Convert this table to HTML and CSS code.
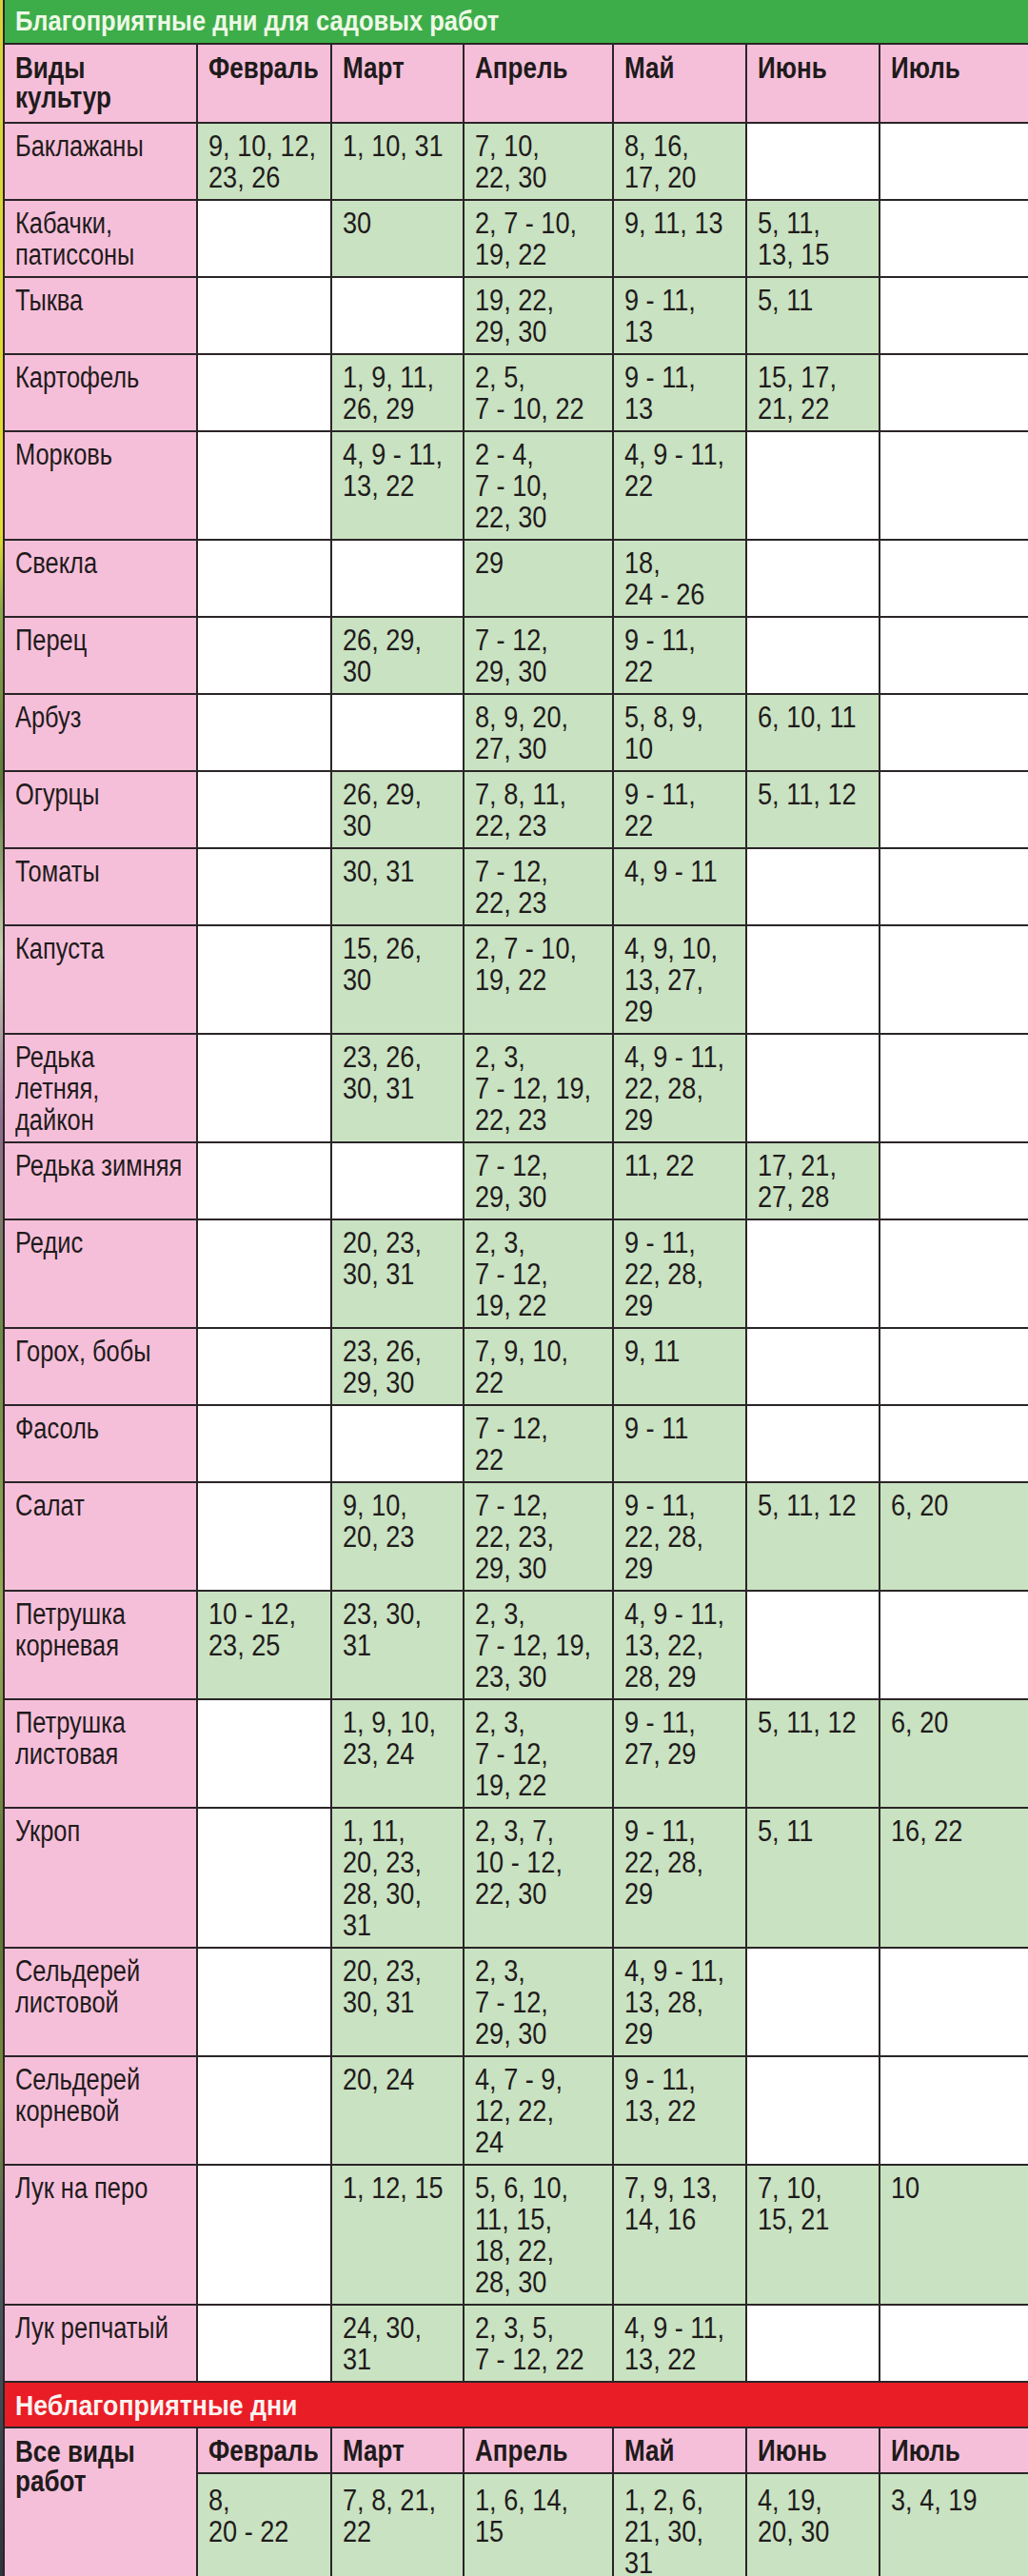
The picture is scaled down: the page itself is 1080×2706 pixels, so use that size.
FILE: index.html
```html
<!DOCTYPE html>
<html lang="ru">
<head>
<meta charset="utf-8">
<title>Благоприятные дни для садовых работ</title>
<link rel="stylesheet" href="styles.css">
</head>
<body>
<div class="sheet">
  <div class="band band-green"><span class="t">Благоприятные дни для садовых работ</span></div>
  <div class="grid">
    <div class="c name head"><span class="t">Виды<br>культур</span></div>
    <div class="c head"><span class="t">Февраль</span></div>
    <div class="c head"><span class="t">Март</span></div>
    <div class="c head"><span class="t">Апрель</span></div>
    <div class="c head"><span class="t">Май</span></div>
    <div class="c head"><span class="t">Июнь</span></div>
    <div class="c head"><span class="t">Июль</span></div>

    <div class="c name"><span class="t">Баклажаны</span></div>
    <div class="c g"><span class="t">9, 10, 12,<br>23, 26</span></div>
    <div class="c g"><span class="t">1, 10, 31</span></div>
    <div class="c g"><span class="t">7, 10,<br>22, 30</span></div>
    <div class="c g"><span class="t">8, 16,<br>17, 20</span></div>
    <div class="c"></div>
    <div class="c"></div>

    <div class="c name"><span class="t">Кабачки,<br>патиссоны</span></div>
    <div class="c"></div>
    <div class="c g"><span class="t">30</span></div>
    <div class="c g"><span class="t">2, 7 - 10,<br>19, 22</span></div>
    <div class="c g"><span class="t">9, 11, 13</span></div>
    <div class="c g"><span class="t">5, 11,<br>13, 15</span></div>
    <div class="c"></div>

    <div class="c name"><span class="t">Тыква</span></div>
    <div class="c"></div>
    <div class="c"></div>
    <div class="c g"><span class="t">19, 22,<br>29, 30</span></div>
    <div class="c g"><span class="t">9 - 11,<br>13</span></div>
    <div class="c g"><span class="t">5, 11</span></div>
    <div class="c"></div>

    <div class="c name"><span class="t">Картофель</span></div>
    <div class="c"></div>
    <div class="c g"><span class="t">1, 9, 11,<br>26, 29</span></div>
    <div class="c g"><span class="t">2, 5,<br>7 - 10, 22</span></div>
    <div class="c g"><span class="t">9 - 11,<br>13</span></div>
    <div class="c g"><span class="t">15, 17,<br>21, 22</span></div>
    <div class="c"></div>

    <div class="c name"><span class="t">Морковь</span></div>
    <div class="c"></div>
    <div class="c g"><span class="t">4, 9 - 11,<br>13, 22</span></div>
    <div class="c g"><span class="t">2 - 4,<br>7 - 10,<br>22, 30</span></div>
    <div class="c g"><span class="t">4, 9 - 11,<br>22</span></div>
    <div class="c"></div>
    <div class="c"></div>

    <div class="c name"><span class="t">Свекла</span></div>
    <div class="c"></div>
    <div class="c"></div>
    <div class="c g"><span class="t">29</span></div>
    <div class="c g"><span class="t">18,<br>24 - 26</span></div>
    <div class="c"></div>
    <div class="c"></div>

    <div class="c name"><span class="t">Перец</span></div>
    <div class="c"></div>
    <div class="c g"><span class="t">26, 29,<br>30</span></div>
    <div class="c g"><span class="t">7 - 12,<br>29, 30</span></div>
    <div class="c g"><span class="t">9 - 11,<br>22</span></div>
    <div class="c"></div>
    <div class="c"></div>

    <div class="c name"><span class="t">Арбуз</span></div>
    <div class="c"></div>
    <div class="c"></div>
    <div class="c g"><span class="t">8, 9, 20,<br>27, 30</span></div>
    <div class="c g"><span class="t">5, 8, 9,<br>10</span></div>
    <div class="c g"><span class="t">6, 10, 11</span></div>
    <div class="c"></div>

    <div class="c name"><span class="t">Огурцы</span></div>
    <div class="c"></div>
    <div class="c g"><span class="t">26, 29,<br>30</span></div>
    <div class="c g"><span class="t">7, 8, 11,<br>22, 23</span></div>
    <div class="c g"><span class="t">9 - 11,<br>22</span></div>
    <div class="c g"><span class="t">5, 11, 12</span></div>
    <div class="c"></div>

    <div class="c name"><span class="t">Томаты</span></div>
    <div class="c"></div>
    <div class="c g"><span class="t">30, 31</span></div>
    <div class="c g"><span class="t">7 - 12,<br>22, 23</span></div>
    <div class="c g"><span class="t">4, 9 - 11</span></div>
    <div class="c"></div>
    <div class="c"></div>

    <div class="c name"><span class="t">Капуста</span></div>
    <div class="c"></div>
    <div class="c g"><span class="t">15, 26,<br>30</span></div>
    <div class="c g"><span class="t">2, 7 - 10,<br>19, 22</span></div>
    <div class="c g"><span class="t">4, 9, 10,<br>13, 27,<br>29</span></div>
    <div class="c"></div>
    <div class="c"></div>

    <div class="c name"><span class="t">Редька<br>летняя,<br>дайкон</span></div>
    <div class="c"></div>
    <div class="c g"><span class="t">23, 26,<br>30, 31</span></div>
    <div class="c g"><span class="t">2, 3,<br>7 - 12, 19,<br>22, 23</span></div>
    <div class="c g"><span class="t">4, 9 - 11,<br>22, 28,<br>29</span></div>
    <div class="c"></div>
    <div class="c"></div>

    <div class="c name"><span class="t">Редька зимняя</span></div>
    <div class="c"></div>
    <div class="c"></div>
    <div class="c g"><span class="t">7 - 12,<br>29, 30</span></div>
    <div class="c g"><span class="t">11, 22</span></div>
    <div class="c g"><span class="t">17, 21,<br>27, 28</span></div>
    <div class="c"></div>

    <div class="c name"><span class="t">Редис</span></div>
    <div class="c"></div>
    <div class="c g"><span class="t">20, 23,<br>30, 31</span></div>
    <div class="c g"><span class="t">2, 3,<br>7 - 12,<br>19, 22</span></div>
    <div class="c g"><span class="t">9 - 11,<br>22, 28,<br>29</span></div>
    <div class="c"></div>
    <div class="c"></div>

    <div class="c name"><span class="t">Горох, бобы</span></div>
    <div class="c"></div>
    <div class="c g"><span class="t">23, 26,<br>29, 30</span></div>
    <div class="c g"><span class="t">7, 9, 10,<br>22</span></div>
    <div class="c g"><span class="t">9, 11</span></div>
    <div class="c"></div>
    <div class="c"></div>

    <div class="c name"><span class="t">Фасоль</span></div>
    <div class="c"></div>
    <div class="c"></div>
    <div class="c g"><span class="t">7 - 12,<br>22</span></div>
    <div class="c g"><span class="t">9 - 11</span></div>
    <div class="c"></div>
    <div class="c"></div>

    <div class="c name"><span class="t">Салат</span></div>
    <div class="c"></div>
    <div class="c g"><span class="t">9, 10,<br>20, 23</span></div>
    <div class="c g"><span class="t">7 - 12,<br>22, 23,<br>29, 30</span></div>
    <div class="c g"><span class="t">9 - 11,<br>22, 28,<br>29</span></div>
    <div class="c g"><span class="t">5, 11, 12</span></div>
    <div class="c g"><span class="t">6, 20</span></div>

    <div class="c name"><span class="t">Петрушка<br>корневая</span></div>
    <div class="c g"><span class="t">10 - 12,<br>23, 25</span></div>
    <div class="c g"><span class="t">23, 30,<br>31</span></div>
    <div class="c g"><span class="t">2, 3,<br>7 - 12, 19,<br>23, 30</span></div>
    <div class="c g"><span class="t">4, 9 - 11,<br>13, 22,<br>28, 29</span></div>
    <div class="c"></div>
    <div class="c"></div>

    <div class="c name"><span class="t">Петрушка<br>листовая</span></div>
    <div class="c"></div>
    <div class="c g"><span class="t">1, 9, 10,<br>23, 24</span></div>
    <div class="c g"><span class="t">2, 3,<br>7 - 12,<br>19, 22</span></div>
    <div class="c g"><span class="t">9 - 11,<br>27, 29</span></div>
    <div class="c g"><span class="t">5, 11, 12</span></div>
    <div class="c g"><span class="t">6, 20</span></div>

    <div class="c name"><span class="t">Укроп</span></div>
    <div class="c"></div>
    <div class="c g"><span class="t">1, 11,<br>20, 23,<br>28, 30,<br>31</span></div>
    <div class="c g"><span class="t">2, 3, 7,<br>10 - 12,<br>22, 30</span></div>
    <div class="c g"><span class="t">9 - 11,<br>22, 28,<br>29</span></div>
    <div class="c g"><span class="t">5, 11</span></div>
    <div class="c g"><span class="t">16, 22</span></div>

    <div class="c name"><span class="t">Сельдерей<br>листовой</span></div>
    <div class="c"></div>
    <div class="c g"><span class="t">20, 23,<br>30, 31</span></div>
    <div class="c g"><span class="t">2, 3,<br>7 - 12,<br>29, 30</span></div>
    <div class="c g"><span class="t">4, 9 - 11,<br>13, 28,<br>29</span></div>
    <div class="c"></div>
    <div class="c"></div>

    <div class="c name"><span class="t">Сельдерей<br>корневой</span></div>
    <div class="c"></div>
    <div class="c g"><span class="t">20, 24</span></div>
    <div class="c g"><span class="t">4, 7 - 9,<br>12, 22,<br>24</span></div>
    <div class="c g"><span class="t">9 - 11,<br>13, 22</span></div>
    <div class="c"></div>
    <div class="c"></div>

    <div class="c name"><span class="t">Лук на перо</span></div>
    <div class="c"></div>
    <div class="c g"><span class="t">1, 12, 15</span></div>
    <div class="c g"><span class="t">5, 6, 10,<br>11, 15,<br>18, 22,<br>28, 30</span></div>
    <div class="c g"><span class="t">7, 9, 13,<br>14, 16</span></div>
    <div class="c g"><span class="t">7, 10,<br>15, 21</span></div>
    <div class="c g"><span class="t">10</span></div>

    <div class="c name"><span class="t">Лук репчатый</span></div>
    <div class="c"></div>
    <div class="c g"><span class="t">24, 30,<br>31</span></div>
    <div class="c g"><span class="t">2, 3, 5,<br>7 - 12, 22</span></div>
    <div class="c g"><span class="t">4, 9 - 11,<br>13, 22</span></div>
    <div class="c"></div>
    <div class="c"></div>
  </div>

  <div class="band band-red"><span class="t">Неблагоприятные дни</span></div>
  <div class="grid grid-bad">
    <div class="c name head all"><span class="t">Все виды<br>работ</span></div>
    <div class="c head short"><span class="t">Февраль</span></div>
    <div class="c head short"><span class="t">Март</span></div>
    <div class="c head short"><span class="t">Апрель</span></div>
    <div class="c head short"><span class="t">Май</span></div>
    <div class="c head short"><span class="t">Июнь</span></div>
    <div class="c head short"><span class="t">Июль</span></div>
    <div class="c g bad"><span class="t">8,<br>20 - 22</span></div>
    <div class="c g bad"><span class="t">7, 8, 21,<br>22</span></div>
    <div class="c g bad"><span class="t">1, 6, 14,<br>15</span></div>
    <div class="c g bad"><span class="t">1, 2, 6,<br>21, 30,<br>31</span></div>
    <div class="c g bad"><span class="t">4, 19,<br>20, 30</span></div>
    <div class="c g bad"><span class="t">3, 4, 19</span></div>
  </div>
</div>
</body>
</html>
```
FILE: styles.css
```css
html, body {
  margin: 0;
  padding: 0;
  width: 1080px;
  overflow: hidden;
}

body {
  background: linear-gradient(to bottom,
    #d9d33a 0px, #e6dc2e 560px, #8ea64a 640px, #5d7a3a 820px,
    #c9cfb0 1000px, #8e6a8e 1180px, #6e8a48 1400px, #98aa54 1700px,
    #5d7236 2000px, #7a8a3e 2200px, #4e5660 2400px, #30343c 2706px);
  font-family: "Liberation Sans", Arial, sans-serif;
  color: #1f1b1c;
}

.sheet {
  margin-left: 3px;
  width: 1082px;
  background: #2a2527;
  padding-left: 2px;
  display: flex;
  flex-direction: column;
  gap: 2px;
  box-sizing: border-box;
}

.t {
  display: block;
  white-space: nowrap;
  transform-origin: 0 0;
  transform: scaleX(0.875);
}

.band {
  height: 45px;
  box-sizing: border-box;
  padding: 4px 0 0 11px;
  font-weight: bold;
  font-size: 29px;
  line-height: 36px;
}

.band-green {
  background: #3dad4a;
  color: #eef8e6;
}

.band-green .t {
  transform: scaleX(0.88);
}

.band-red {
  height: 46px;
  background: #e91d26;
  color: #fbf2f0;
  padding-top: 6px;
}

.band-red .t {
  transform: scaleX(0.92);
}

.grid {
  display: grid;
  grid-template-columns: 201px 139px 137px 155px 138px 138px 160px;
  gap: 2px;
  background: #2a2527;
}

.c {
  background: #ffffff;
  padding: 7px 4px 6px 11px;
  min-height: 66px;
  font-size: 31px;
  line-height: 33px;
  overflow: hidden;
}

.c.name {
  background: #f6bfd9;
}

.c.name .t {
  transform: scaleX(0.82);
}

.c.g {
  background: #c9e2c1;
}

.c.head {
  background: #f6bfd9;
  font-weight: bold;
  padding-top: 9px;
  line-height: 31px;
}

.c.head .t {
  transform: scaleX(0.84);
}

.c.short {
  min-height: 33px;
  padding-top: 7px;
  line-height: 33px;
}

.c.all {
  grid-row: span 2;
}

.c.bad {
  min-height: 99px;
  padding-top: 11px;
}
```
